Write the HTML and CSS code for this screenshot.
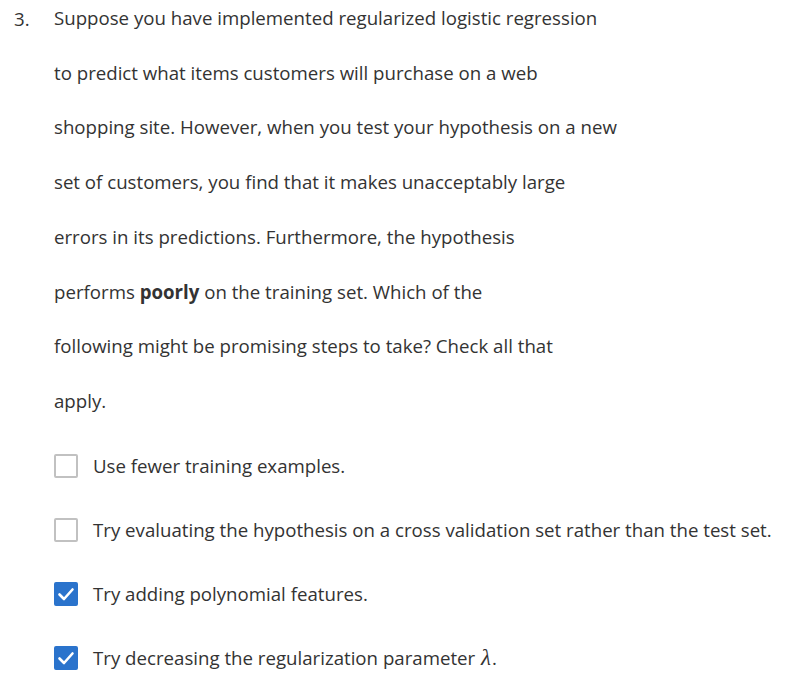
FILE: index.html
```html
<!DOCTYPE html>
<html>
<head>
<meta charset="utf-8">
<link rel="stylesheet" href="styles.css">
</head>
<body>
<div class="question">
  <div class="num">3.</div>
  <div class="content">
    <p class="prompt">Suppose you have implemented regularized logistic regression<br>to predict what items customers will purchase on a web<br>shopping site. However, when you test your hypothesis on a new<br>set of customers, you find that it makes unacceptably large<br>errors in its predictions. Furthermore, the hypothesis<br>performs <strong>poorly</strong> on the training set. Which of the<br>following might be promising steps to take? Check all that<br>apply.</p>
    <ul class="options">
      <li class="option"><span class="box"></span><span class="label">Use fewer training examples.</span></li>
      <li class="option"><span class="box"></span><span class="label">Try evaluating the hypothesis on a cross validation set rather than the test set.</span></li>
      <li class="option"><span class="box checked"><svg viewBox="0 0 24 24" width="24" height="24"><path d="M5.5 12.5 L10 17 L18.5 7.5" fill="none" stroke="#fff" stroke-width="2.6" stroke-linecap="round" stroke-linejoin="round"/></svg></span><span class="label">Try adding polynomial features.</span></li>
      <li class="option"><span class="box checked"><svg viewBox="0 0 24 24" width="24" height="24"><path d="M5.5 12.5 L10 17 L18.5 7.5" fill="none" stroke="#fff" stroke-width="2.6" stroke-linecap="round" stroke-linejoin="round"/></svg></span><span class="label">Try decreasing the regularization parameter <span class="math">λ</span>.</span></li>
    </ul>
  </div>
</div>
</body>
</html>
```

FILE: styles.css
```css
html, body {
  margin: 0;
  padding: 0;
  background: #fff;
}
body {
  font-family: "Open Sans", "Liberation Sans", sans-serif;
  font-size: 18.67px;
  color: #333;
}
.question {
  display: flex;
  padding: 0 0 0 14px;
}
.num {
  width: 40px;
  line-height: 37px;
}
.content {
  flex: 1;
}
.prompt {
  margin: 0;
  line-height: 54.7px;
  margin-top: -9px;
}
.prompt strong {
  font-weight: 700;
}
.options {
  list-style: none;
  margin: 25px 0 0 0;
  padding: 0;
  display: flex;
  flex-direction: column;
  gap: 40px;
}
.option {
  display: flex;
  align-items: center;
  height: 24px;
}
.box {
  width: 24px;
  height: 24px;
  box-sizing: border-box;
  border: 2px solid #c1c1c1;
  border-radius: 2px;
  margin-right: 15px;
  flex: none;
  display: flex;
  align-items: center;
  justify-content: center;
}
.box.checked {
  background: #2a73cc;
  border-color: #2a73cc;
}
.box svg {
  flex: none;
}
.label {
  line-height: 24px;
}
.math {
  font-family: "Liberation Serif", "DejaVu Serif", serif;
  font-style: italic;
  font-size: 23px;
  padding-left: 1px;
  padding-right: 1px;
}
```
